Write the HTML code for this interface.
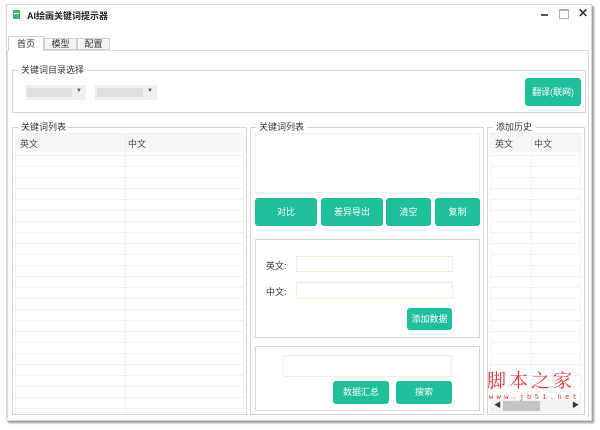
<!DOCTYPE html>
<html><head><meta charset="utf-8"><style>
*{margin:0;padding:0;box-sizing:border-box}
body{width:600px;height:430px;background:#fff;position:relative;overflow:hidden;font-family:"Liberation Sans","Noto Sans CJK SC",sans-serif;font-size:9px;color:#333}
.a{position:absolute}
.win{left:6px;top:4px;width:586px;height:417px;background:#fff;border:1px solid #d8d8d8;box-shadow:2px 2px 2px #999}
.g{border:1px solid #d4d4d4}
.lg{background:#fff;padding:0 3px;font-size:9px;color:#333;line-height:10px}
.btn{background:#1fbf9a;color:#fff;border-radius:3px;text-align:center;font-size:9px}
.inp{border:1px solid #eeeedd;background:#fff}
.grid{border:1px dotted #e8e8e8;background-image:repeating-linear-gradient(to bottom,transparent 0,transparent 10px,#f2f2f2 10px,#f2f2f2 11px)}
.hd{background:#f6f6f6}
</style></head><body>
<div class="a win"></div>
<div class="a" style="left:13px;top:10px;width:7px;height:9px;background:#3cb86a"></div>
<div class="a" style="left:14px;top:13px;width:5px;height:1px;background:#fff"></div>
<div class="a" style="left:27px;top:9px;font-weight:bold;font-size:9px;color:#222">AI绘画关键词提示器</div>
<div class="a" style="left:541px;top:14px;width:7px;height:2px;background:#555"></div>
<div class="a" style="left:559px;top:9px;width:10px;height:10px;border:1px solid #aaa;border-top-width:2px"></div>
<div class="a" style="left:578px;top:6px;font-size:12px;font-weight:bold;color:#333">✕</div>
<div class="a" style="left:7px;top:50px;width:582px;height:368px;border:1px solid #d8d8d8;border-bottom:none"></div>
<div class="a" style="left:8px;top:36px;width:36px;height:15px;border:1px solid #d0d0d0;border-bottom:none;background:#fff;text-align:center;line-height:14px">首页</div>
<div class="a" style="left:44px;top:38px;width:33px;height:12px;border:1px solid #d0d0d0;background:#f4f4f4;text-align:center;line-height:11px">模型</div>
<div class="a" style="left:77px;top:38px;width:33px;height:12px;border:1px solid #d0d0d0;background:#f4f4f4;text-align:center;line-height:11px">配置</div>
<div class="a g" style="left:12px;top:70px;width:574px;height:43px"></div>
<div class="a lg" style="left:18px;top:65px">关键词目录选择</div>
<div class="a" style="left:25px;top:85px;width:61px;height:15px;background:#f0f0f0"></div>
<div class="a" style="left:27px;top:88px;width:45px;height:9px;background:#e0e0e0"></div>
<div class="a" style="left:76px;top:88px;font-size:6px;color:#555">▼</div>
<div class="a" style="left:95px;top:85px;width:62px;height:15px;background:#f0f0f0"></div>
<div class="a" style="left:97px;top:88px;width:46px;height:9px;background:#e0e0e0"></div>
<div class="a" style="left:147px;top:88px;font-size:6px;color:#555">▼</div>
<div class="a btn" style="left:525px;top:78px;width:56px;height:28px;line-height:28px">翻译(联网)</div>
<div class="a g" style="left:12px;top:127px;width:235px;height:288px"></div>
<div class="a lg" style="left:18px;top:122px">关键词列表</div>
<div class="a grid" style="left:15px;top:133px;width:229px;height:280px"></div>
<div class="a hd" style="left:16px;top:134px;width:227px;height:18px"></div>
<div class="a" style="left:125px;top:134px;width:1px;height:278px;border-left:1px dotted #e8e8e8"></div>
<div class="a" style="left:20px;top:137px;color:#444">英文</div>
<div class="a" style="left:128px;top:137px;color:#444">中文</div>
<div class="a g" style="left:250px;top:127px;width:234px;height:288px"></div>
<div class="a lg" style="left:256px;top:122px">关键词列表</div>
<div class="a" style="left:255px;top:133px;width:225px;height:60px;border:1px dotted #e6e6dc"></div>
<div class="a btn" style="left:255px;top:198px;width:62px;height:28px;line-height:28px">对比</div>
<div class="a btn" style="left:321px;top:198px;width:62px;height:28px;line-height:28px">差异导出</div>
<div class="a btn" style="left:386px;top:198px;width:45px;height:28px;line-height:28px">清空</div>
<div class="a btn" style="left:435px;top:198px;width:45px;height:28px;line-height:28px">复制</div>
<div class="a g" style="left:255px;top:239px;width:225px;height:99px"></div>
<div class="a" style="left:266px;top:259px">英文:</div>
<div class="a inp" style="left:296px;top:256px;width:157px;height:16px"></div>
<div class="a" style="left:266px;top:285px">中文:</div>
<div class="a inp" style="left:296px;top:282px;width:157px;height:16px"></div>
<div class="a btn" style="left:407px;top:308px;width:45px;height:22px;line-height:22px">添加数据</div>
<div class="a g" style="left:255px;top:346px;width:225px;height:65px"></div>
<div class="a inp" style="left:283px;top:355px;width:169px;height:22px"></div>
<div class="a btn" style="left:333px;top:381px;width:56px;height:23px;line-height:23px">数据汇总</div>
<div class="a btn" style="left:396px;top:381px;width:56px;height:23px;line-height:23px">搜索</div>
<div class="a g" style="left:487px;top:127px;width:98px;height:288px"></div>
<div class="a lg" style="left:493px;top:122px">添加历史</div>
<div class="a grid" style="left:490px;top:133px;width:91px;height:280px"></div>
<div class="a hd" style="left:491px;top:134px;width:89px;height:18px"></div>
<div class="a" style="left:531px;top:134px;width:1px;height:266px;border-left:1px dotted #e8e8e8"></div>
<div class="a" style="left:495px;top:137px;color:#444">英文</div>
<div class="a" style="left:534px;top:137px;color:#444">中文</div>
<div class="a" style="left:491px;top:400px;width:89px;height:12px;background:#f2f2f2"></div>
<div class="a" style="left:503px;top:401px;width:37px;height:10px;background:#c4c4c4"></div>
<div class="a" style="left:494px;top:400px;font-size:7px;color:#333">◀</div>
<div class="a" style="left:572px;top:400px;font-size:7px;color:#333">▶</div>
<div class="a" style="left:487px;top:368px;font-size:19px;color:#e8363a;font-family:'Noto Serif CJK SC',serif;letter-spacing:3px;line-height:24px">脚本之家</div>
<div class="a" style="left:489px;top:394px;font-size:7px;color:#e8363a;letter-spacing:3.4px;font-family:'Liberation Mono',monospace">www.jb51.net</div>
</body></html>
